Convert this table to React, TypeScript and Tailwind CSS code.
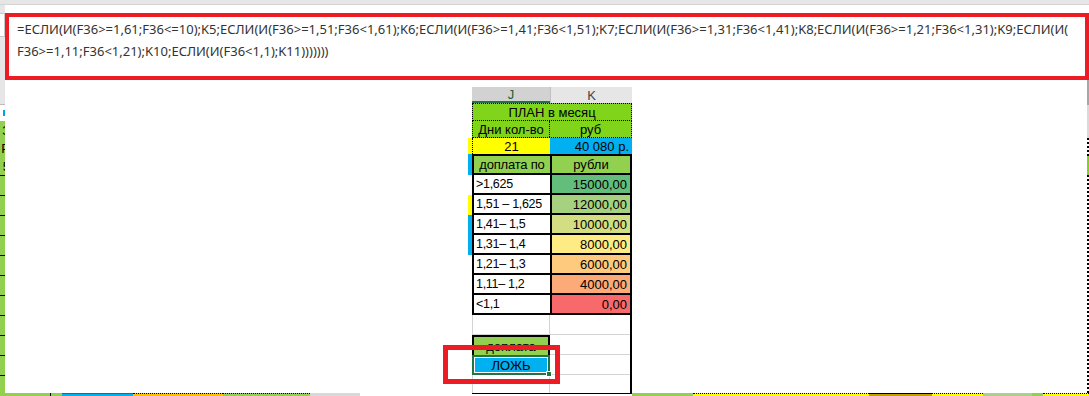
import React from "react";

const line1 =
  "=ЕСЛИ(И(F36>=1,61;F36<=10);K5;ЕСЛИ(И(F36>=1,51;F36<1,61);K6;ЕСЛИ(И(F36>=1,41;F36<1,51);K7;ЕСЛИ(И(F36>=1,31;F36<1,41);K8;ЕСЛИ(И(F36>=1,21;F36<1,31);K9;ЕСЛИ(И(";
const line2 = "F36>=1,11;F36<1,21);K10;ЕСЛИ(И(F36<1,1);K11)))))))";

// ranges table: J label, K amount, K fill, sliver colour on the left
const bands = [
  { range: ">1,625", sum: "15000,00", fill: "bg-[#63be7b]", side: "bg-white" },
  { range: "1,51 – 1,625", sum: "12000,00", fill: "bg-[#a6d17f]", side: "bg-[#ffff00]" },
  { range: "1,41– 1,5", sum: "10000,00", fill: "bg-[#d2de81]", side: "bg-[#00b0f0]" },
  { range: "1,31– 1,4", sum: "8000,00", fill: "bg-[#ffeb84]", side: "bg-[#00b0f0]" },
  { range: "1,21– 1,3", sum: "6000,00", fill: "bg-[#fdca7e]", side: "bg-white" },
  { range: "1,11– 1,2", sum: "4000,00", fill: "bg-[#fbaa78]", side: "bg-white" },
  { range: "<1,1", sum: "0,00", fill: "bg-[#f8696b]", side: "bg-white" },
];

const bottomStrip = [
  { w: "w-[50px]", c: "bg-[#92d050]" },
  { w: "w-[1px]", c: "bg-black" },
  { w: "w-[11px]", c: "bg-[#92d050]" },
  { w: "w-[71px]", c: "bg-[#00b0f0] border-t border-[#1d6b8a]" },
  { w: "w-[90px]", c: "bg-[#ffc000] border-t border-dotted border-black" },
  { w: "w-[87px]", c: "bg-[#92d050] border-t border-dotted border-black" },
  { w: "w-[50px]", c: "bg-[#d9d9d9]" },
  { w: "w-[112px]", c: "bg-white" },
  { w: "w-[160px]", c: "bg-white border-t border-black" },
  { w: "w-[61px]", c: "bg-[#92d050]" },
  { w: "w-[176px]", c: "bg-[#ffff00] border-t border-dotted border-black" },
  { w: "w-[63px]", c: "bg-[#bfa000] border-t border-black" },
  { w: "w-[51px]", c: "bg-[#ffff00] border-t border-dotted border-black" },
  { w: "w-[49px]", c: "bg-[#a9d08e]" },
  { w: "w-[11px]", c: "bg-[#92d050]" },
  { w: "w-[46px]", c: "bg-[#ffff00] border-t border-dotted border-black" },
];

function LeftEdge() {
  return (
    <div className="flex w-[5px] shrink-0 flex-col overflow-hidden">
      <div className="h-[24px] bg-[#e6e6e6]" />
      <div className="h-px bg-[#bdbdbd]" />
      <div className="flex h-[16px] items-center justify-end bg-white">
        <div className="h-[6px] w-[2px] bg-[#00a2e8]" />
      </div>
      {["З", "Р", "5"].map((ch) => (
        <div
          key={ch}
          className="flex h-[18px] items-center justify-end bg-[#92d050] text-[13px] leading-none text-black"
        >
          <span className="-mr-[5px]">{ch}</span>
        </div>
      ))}
      {Array.from({ length: 10 }).map((_, i) => (
        <div key={i} className="h-[20px] border-t border-black bg-[#92d050]" />
      ))}
      <div className="h-[18px] border-t border-black bg-[#92d050]" />
    </div>
  );
}

function RightEdge() {
  return (
    <div className="flex w-[2px] shrink-0 flex-col">
      <div className="h-[25px] bg-[#a6a6a6]" />
      <div className="h-[33px] bg-[#d9d9d9]" />
      <div className="h-[18px] border-r-2 border-dotted border-black" />
      <div className="h-[19px] bg-[#7fd31a]" />
      <div className="flex-1 border-r-2 border-dotted border-black" />
    </div>
  );
}

function Sliver() {
  return (
    <div className="flex w-[4px] shrink-0 flex-col">
      <div className="h-[51px] bg-white" />
      <div className="h-[16px] bg-[#ffff00]" />
      <div className="h-[21px] bg-[#00b0f0]" />
      {bands.map((b) => (
        <div key={b.range} className={`h-[20px] ${b.side}`} />
      ))}
    </div>
  );
}

function PlanBlock() {
  const cell = "flex items-center leading-none";
  return (
    <div className="flex w-[160px] shrink-0 flex-col text-[13px] text-black">
      {/* column headers */}
      <div className="flex h-[16px] text-[13px] leading-none">
        <div className="flex w-[78px] items-center justify-center border-b-2 border-[#217346] bg-[#d2d2d2] text-[#1e5c3a]">
          J
        </div>
        <div className="flex flex-1 items-center justify-center border-l border-[#c0c0c0] bg-[#e6e6e6] text-[#444]">
          K
        </div>
      </div>
      <div className={`${cell} h-[18px] justify-center border border-dotted border-black bg-[#80d41a]`}>
        ПЛАН в месяц
      </div>
      <div className="flex h-[17px] border-x border-b border-dotted border-black bg-[#80d41a]">
        <div className={`${cell} w-[77px] justify-center border-r border-dotted border-black`}>Дни кол-во</div>
        <div className={`${cell} flex-1 justify-center`}>руб</div>
      </div>
      <div className="flex h-[16px]">
        <div className={`${cell} w-[78px] justify-center border-l border-dotted border-black bg-[#ffff00]`}>21</div>
        <div className={`${cell} flex-1 justify-end bg-[#00b0f0] pr-[3px]`}>40 080 р.</div>
      </div>

      <div className="flex flex-col border-2 border-black">
        <div className="flex h-[19px] border-b-2 border-black bg-[#92d050]">
          <div className={`${cell} w-[78px] justify-center whitespace-nowrap border-r-2 border-black tracking-[-0.2px]`}>
            доплата по
          </div>
          <div className={`${cell} flex-1 justify-center`}>рубли</div>
        </div>
        {bands.map((b, i) => (
          <div
            key={b.range}
            className={`flex ${i === bands.length - 1 ? "h-[18px]" : "h-[20px] border-b-2 border-black"}`}
          >
            <div
              className={`${cell} w-[78px] whitespace-nowrap border-r-2 border-black bg-white pl-[2px] text-[12.5px] tracking-[-0.3px]`}
            >
              {b.range}
            </div>
            <div className={`${cell} flex-1 justify-end pr-[3px] ${b.fill}`}>{b.sum}</div>
          </div>
        ))}
      </div>

      {/* empty rows under the table */}
      <div className="flex h-[20px] border-r-2 border-black">
        <div className="w-[78px] border-x border-b border-[#d4d4d4]" />
        <div className="flex-1 border-b border-[#d4d4d4]" />
      </div>
      <div className="flex h-[20px] border-r-2 border-black">
        <div className={`${cell} w-[78px] justify-center border-x-2 border-t-2 border-black bg-[#92d050]`}>
          доплата
        </div>
        <div className="flex-1 border-b border-[#d4d4d4]" />
      </div>
      <div className="flex h-[20px] border-r-2 border-black">
        <div className="relative w-[78px] border-2 border-[#217346] bg-white p-px">
          <div className={`${cell} h-full justify-center bg-[#00b0f0]`}>ЛОЖЬ</div>
          <div className="absolute -bottom-[4px] -right-[4px] h-[6px] w-[6px] border border-white bg-[#217346]" />
        </div>
        <div className="flex-1 border-b border-[#d4d4d4]" />
      </div>
      <div className="flex h-[18px] border-r-2 border-black">
        <div className="w-[78px] border-x border-[#d4d4d4]" />
        <div className="flex-1" />
      </div>
    </div>
  );
}

export default function App() {
  return (
    <div
      className="relative flex h-[396px] w-[1089px] flex-col overflow-hidden bg-white"
      style={{ fontFamily: '"Liberation Sans", Arial, sans-serif' }}
    >
      <div className="h-[5px] border-b border-[#d4d4d4] bg-[#e6e6e6]" />

      {/* formula bar */}
      <div className="flex h-[75px]">
        <div className="w-[5px] shrink-0 bg-[#e6e6e6] pt-[8px]">
          <div className="h-[24px] border border-l-0 border-[#c6c6c6] bg-white" />
        </div>
        <div className="w-[1084px] shrink-0 pt-[8px]">
          <div
            className="h-[67px] overflow-hidden border-4 border-[#ed1c24] bg-white pl-[8px] pt-px text-[13px] leading-[22px] text-[#333]"
            style={{ fontFamily: '"Noto Sans", "Open Sans", sans-serif' }}
          >
            <div className="whitespace-nowrap">{line1}</div>
            <div className="whitespace-nowrap">{line2}</div>
          </div>
        </div>
      </div>

      {/* sheet */}
      <div className="flex h-[313px]">
        <LeftEdge />
        <div className="flex w-[1082px] shrink-0 bg-white pl-[463px] pt-[7px]">
          <Sliver />
          <PlanBlock />
        </div>
        <RightEdge />
      </div>

      <div className="flex h-[3px]">
        {bottomStrip.map((s, i) => (
          <div key={i} className={`${s.w} shrink-0 ${s.c}`} />
        ))}
      </div>

      {/* annotation around the result cell */}
      <div className="pointer-events-none absolute left-[443px] top-[345px] h-[39px] w-[117px] border-[5px] border-[#ed1c24]" />
    </div>
  );
}
